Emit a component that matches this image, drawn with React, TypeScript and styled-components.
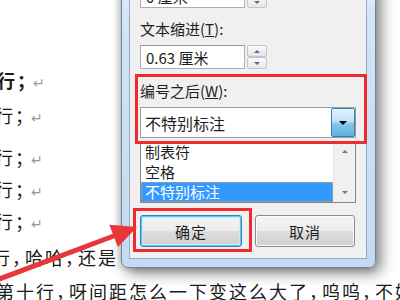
import React from 'react';
import styled, { createGlobalStyle } from 'styled-components';

const GlobalStyle = createGlobalStyle`
  html, body {
    margin: 0;
    padding: 0;
    background: #fff;
  }
  body {
    width: 400px;
    height: 300px;
    overflow: hidden;
  }
`;

const Page = styled.div`
  position: relative;
  width: 400px;
  height: 300px;
  overflow: hidden;
  background: #fff;
  font-family: "Noto Sans CJK SC", "Noto Sans", sans-serif;
`;

/* ---- document behind the dialog ---- */

const Doc = styled.div`
  display: flex;
  flex-direction: column;
  padding-top: 70px;
  font-size: 18px;
  letter-spacing: 2px;
  color: #1a1a1a;
`;

const Line = styled.div<{ $shift: number; $gap: number; $bold?: boolean }>`
  height: 20px;
  line-height: 20px;
  white-space: nowrap;
  margin-left: ${p => p.$shift}px;
  margin-bottom: ${p => p.$gap}px;
  font-weight: ${p => (p.$bold ? 700 : 400)};
`;

const Punct = styled.span`
  letter-spacing: -5px;
`;

const Mark = styled.span`
  margin-left: 3px;
  color: #9a9a9a;
  font-size: 14px;
  font-weight: 400;
  letter-spacing: 0;
  font-family: "DejaVu Sans", sans-serif;
`;

/* ---- dialog window ---- */

const Win = styled.div`
  position: absolute;
  left: 121px;
  top: -26px;
  z-index: 2;
  width: 255px;
  box-sizing: border-box;
  padding: 8px 8px 8px 7px;
  border: 1px solid #6c84a2;
  border-radius: 0 0 7px 7px;
  background: linear-gradient(to bottom, #eef4fb 0px, #d3e4f5 40px, #c4daf1 100%);
  box-shadow: 5px 5px 14px rgba(0, 0, 0, 0.5), -2px 1px 6px rgba(0, 0, 0, 0.18);
`;

const Body = styled.div`
  display: flex;
  flex-direction: column;
  padding: 0 10px 6px 10px;
  border: 1px solid #9aabc0;
  background: #f0f0f0;
  font-size: 15px;
  color: #1e1e1e;
`;

const Label = styled.div<{ $top: number }>`
  height: 16px;
  line-height: 16px;
  margin-top: ${p => p.$top}px;
  white-space: nowrap;
`;

const Key = styled.span`
  text-decoration: underline;
`;

const SpinRow = styled.div<{ $top: number }>`
  display: flex;
  gap: 2px;
  height: 24px;
  margin-top: ${p => p.$top}px;
`;

const TextBox = styled.div`
  width: 105px;
  box-sizing: border-box;
  display: flex;
  align-items: center;
  padding-left: 5px;
  border: 1px solid #abadb3;
  border-top-color: #8f949b;
  background: #fff;
  font-size: 15px;
  white-space: nowrap;
`;

const Spinner = styled.div`
  width: 20px;
  display: flex;
  flex-direction: column;
`;

const SpinHalf = styled.div`
  flex: 1;
  display: flex;
  align-items: center;
  justify-content: center;
  border: 1px solid #c2c6cc;
  border-radius: 2px;
  background: linear-gradient(to bottom, #fbfbfb, #e6e6e6);
`;

const Tri = styled.span<{ $dir: 'up' | 'down'; $size: number; $color: string }>`
  width: 0;
  height: 0;
  border-left: ${p => p.$size}px solid transparent;
  border-right: ${p => p.$size}px solid transparent;
  ${p => (p.$dir === 'up'
    ? `border-bottom: ${p.$size}px solid ${p.$color};`
    : `border-top: ${p.$size}px solid ${p.$color};`)}
`;

const Highlight = styled.div`
  position: relative;
  z-index: 1;
  display: flex;
  flex-direction: column;
  margin: 5px -11px 0 -5px;
  padding: 6px 8px 3px 2px;
  border: 3px solid #ef2b2f;
`;

const Combo = styled.div`
  display: flex;
  height: 31px;
  margin-top: 8px;
  box-sizing: border-box;
  border: 1px solid #9c9c9c;
  background: #fff;
`;

const ComboText = styled.div`
  flex: 1;
  display: flex;
  align-items: center;
  padding-left: 4px;
  font-size: 16px;
  white-space: nowrap;
`;

const DropBtn = styled.div`
  width: 22px;
  display: flex;
  align-items: center;
  justify-content: center;
  border: 1px solid #3c7fb1;
  border-radius: 2px;
  background: linear-gradient(to bottom, #e3f3fc 0%, #bfe3f8 45%, #86c6ed 55%, #5fb0e0 100%);
`;

const List = styled.div`
  display: flex;
  height: 62px;
  margin-top: -3px;
  box-sizing: border-box;
  border: 1px solid #82878f;
  background: #fff;
`;

const Items = styled.div`
  flex: 1;
  display: flex;
  flex-direction: column;
`;

const Item = styled.div<{ $selected?: boolean }>`
  height: 20px;
  line-height: 20px;
  padding-left: 4px;
  font-size: 15px;
  white-space: nowrap;
  overflow: hidden;
  background: ${p => (p.$selected ? '#3399ff' : 'transparent')};
  color: ${p => (p.$selected ? '#fff' : '#1e1e1e')};
  outline: ${p => (p.$selected ? '1px dotted #d9a060' : 'none')};
  outline-offset: -1px;
`;

const Scroll = styled.div`
  width: 22px;
  display: flex;
  flex-direction: column;
  align-items: center;
  justify-content: space-between;
  padding: 8px 0;
  box-sizing: border-box;
  border-left: 1px solid #e6e6e6;
  background: #f0f0f0;
`;

const ButtonRow = styled.div`
  display: flex;
  align-items: flex-start;
  gap: 3px;
  margin-top: 5px;
`;

const FocusMark = styled.div`
  margin-left: -7px;
  padding: 4px 7px 2px 4px;
  border: 3px solid #ef2b2f;
`;

const Btn = styled.div<{ $w: number; $focus?: boolean; $top?: number }>`
  width: ${p => p.$w}px;
  height: 32px;
  box-sizing: border-box;
  display: flex;
  align-items: center;
  justify-content: center;
  margin-top: ${p => p.$top ?? 0}px;
  border: 1px solid ${p => (p.$focus ? '#3c7fb1' : '#8a8a8a')};
  border-radius: 3px;
  background: linear-gradient(to bottom, #f4f4f4 0%, #ececec 50%, #dedede 50%, #d0d0d0 100%);
  box-shadow: ${p => (p.$focus ? 'inset 0 0 0 1px #5ccaf0, inset 0 0 0 2px #c8eefb' : 'inset 0 0 0 1px #fbfbfb')};
  letter-spacing: 1px;
`;

const Overlay = styled.svg`
  position: absolute;
  left: 0;
  top: 0;
  z-index: 3;
  pointer-events: none;
`;

const Ret = () => <Mark>↵</Mark>;

export default function App() {
  return (
    <Page>
      <GlobalStyle />
      <Doc>
        <Line $shift={-3} $gap={15} $bold>行<Punct>；</Punct><Ret /></Line>
        <Line $shift={-5} $gap={22}>行<Punct>；</Punct><Ret /></Line>
        <Line $shift={-5} $gap={12}>行<Punct>；</Punct><Ret /></Line>
        <Line $shift={-5} $gap={12}>行<Punct>；</Punct><Ret /></Line>
        <Line $shift={-5} $gap={16}>行<Punct>；</Punct><Ret /></Line>
        <Line $shift={-8} $gap={14}>
          行<Punct>，</Punct>哈哈<Punct>，</Punct>还是<Punct>　</Punct>没有变化<Punct>；</Punct><Ret />
        </Line>
        <Line $shift={-4} $gap={0}>
          第十行<Punct>，</Punct>呀间距怎么一下变这么大了<Punct>，</Punct>呜呜<Punct>，</Punct>不好意思
        </Line>
      </Doc>

      <Win>
        <Body>
          <SpinRow $top={0}>
            <TextBox>0 厘米</TextBox>
            <Spinner>
              <SpinHalf><Tri $dir="up" $size={3} $color="#5a6b94" /></SpinHalf>
              <SpinHalf><Tri $dir="down" $size={3} $color="#5a6b94" /></SpinHalf>
            </Spinner>
          </SpinRow>
          <Label $top={13}>文本缩进(<Key>T</Key>):</Label>
          <SpinRow $top={8}>
            <TextBox>0.63 厘米</TextBox>
            <Spinner>
              <SpinHalf><Tri $dir="up" $size={3} $color="#5a6b94" /></SpinHalf>
              <SpinHalf><Tri $dir="down" $size={3} $color="#5a6b94" /></SpinHalf>
            </Spinner>
          </SpinRow>

          <Highlight>
            <Label $top={0}>编号之后(<Key>W</Key>):</Label>
            <Combo>
              <ComboText>不特别标注</ComboText>
              <DropBtn><Tri $dir="down" $size={4} $color="#000" /></DropBtn>
            </Combo>
          </Highlight>

          <List>
            <Items>
              <Item>制表符</Item>
              <Item>空格</Item>
              <Item $selected>不特别标注</Item>
            </Items>
            <Scroll>
              <Tri $dir="up" $size={3} $color="#7a7a7a" />
              <Tri $dir="down" $size={3} $color="#7a7a7a" />
            </Scroll>
          </List>

          <ButtonRow>
            <FocusMark>
              <Btn $w={102} $focus>确定</Btn>
            </FocusMark>
            <Btn $w={100} $top={7}>取消</Btn>
          </ButtonRow>
        </Body>
      </Win>

      <Overlay width="400" height="300" viewBox="0 0 400 300">
        <line x1="-6" y1="281" x2="115" y2="235.5" stroke="#e8363a" strokeWidth="5" />
        <polygon points="137,227 117.9,247.1 109.3,224.7" fill="#e8363a" />
      </Overlay>
    </Page>
  );
}
